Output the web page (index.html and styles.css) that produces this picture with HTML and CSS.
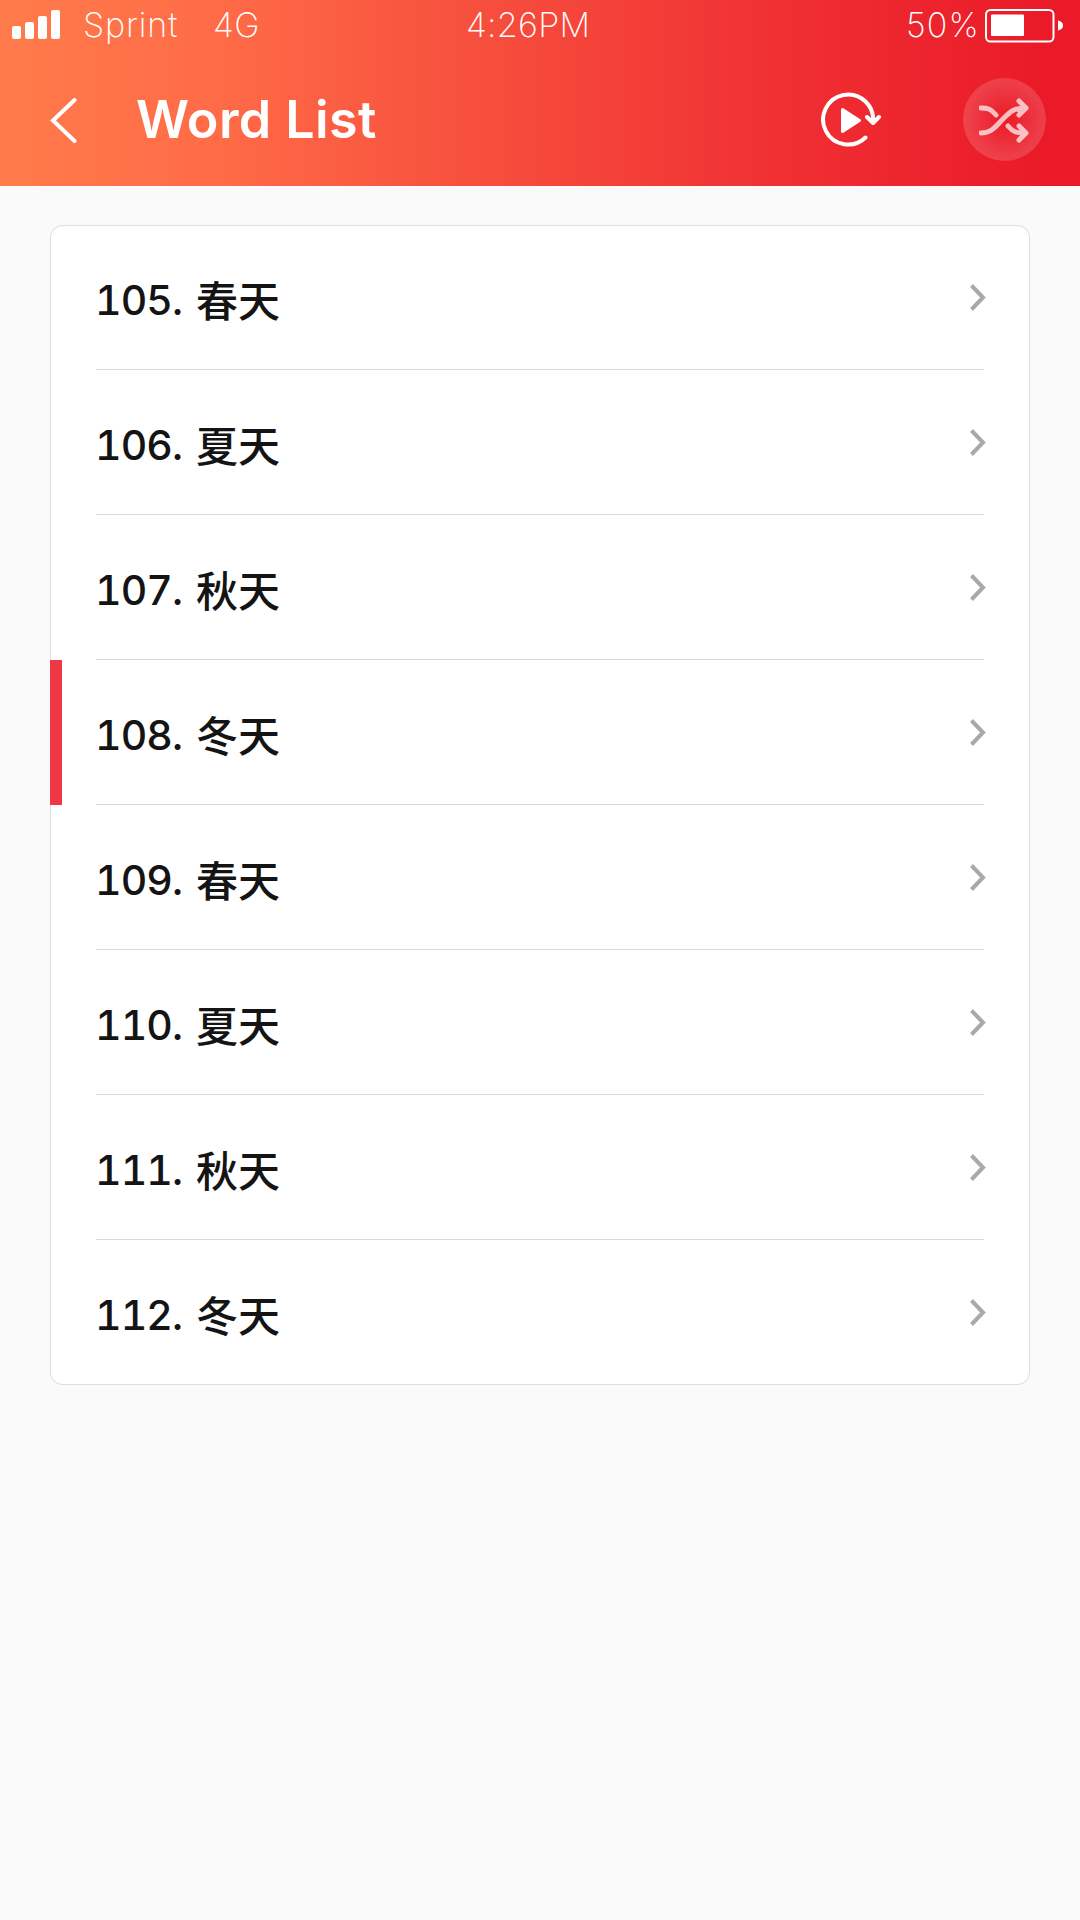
FILE: index.html
```html
<!DOCTYPE html>
<html lang="en">
<head>
<meta charset="utf-8">
<title>Word List</title>
<link rel="stylesheet" href="styles.css">
</head>
<body>
<svg class="defs" width="0" height="0"><symbol id="chevron" viewBox="0 0 16 28"><path d="M1.500 1.500 13 13.500 1.500 25.500"/></symbol></svg>
<header class="header">
  <div class="status">
    <svg class="signal" width="48" height="30" viewBox="0 0 48 30"><rect y="16" width="9" height="13" rx="2"/><rect x="13" y="12" width="9" height="17" rx="2"/><rect x="26" y="6" width="9" height="23" rx="2"/><rect x="39" width="9" height="29" rx="2"/></svg>
    <span class="carrier">Sprint</span>
    <span class="network">4G</span>
    <span class="time">4:26PM</span>
    <span class="percent">50%</span>
    <svg class="battery" width="79" height="34" viewBox="0 0 79 34"><rect class="case" x="1" y="1" width="67.5" height="31.5" rx="4.5"/><rect x="6" y="5.5" width="33" height="21.5" rx="1"/><path d="M73 11.5Q78 12.500 78 16.500t-5 5z"/></svg>
  </div>
  <div class="toolbar">
    <svg class="back" width="28" height="48" viewBox="0 0 28 48"><path d="M25.500 3 4 23.500 25.500 44"/></svg>
    <h1 class="title">Word List</h1>
    <svg class="replay" width="62" height="56" viewBox="0 0 62 56"><path class="arc" d="M44.500 45.500A25 25 0 1 1 52 30M46 25 52 31 58 25"/><path class="play" d="M21.500 17.500 38.500 28.500 21.500 39.500z"/></svg>
    <div class="shuffle">
      <svg width="52" height="46" viewBox="0 0 52 46"><g><path d="M2 11C9 11 12 12 17 18M2 36C13 36 17 29 24 22S34 11 47 11M40 4 47 11 40 18M29 29C34 35 37 36 47 36M40 29 47 36 40 43"/></g></svg>
    </div>
  </div>
</header>
<main>
  <ul class="list">
    <li class="row"><span class="num">105.</span><span class="word">春天</span><svg class="chev"><use href="#chevron"/></svg></li>
    <li class="row"><span class="num">106.</span><span class="word">夏天</span><svg class="chev"><use href="#chevron"/></svg></li>
    <li class="row"><span class="num">107.</span><span class="word">秋天</span><svg class="chev"><use href="#chevron"/></svg></li>
    <li class="row active"><span class="num">108.</span><span class="word">冬天</span><svg class="chev"><use href="#chevron"/></svg></li>
    <li class="row"><span class="num">109.</span><span class="word">春天</span><svg class="chev"><use href="#chevron"/></svg></li>
    <li class="row"><span class="num">110.</span><span class="word">夏天</span><svg class="chev"><use href="#chevron"/></svg></li>
    <li class="row"><span class="num">111.</span><span class="word">秋天</span><svg class="chev"><use href="#chevron"/></svg></li>
    <li class="row"><span class="num">112.</span><span class="word">冬天</span><svg class="chev"><use href="#chevron"/></svg></li>
  </ul>
</main>
</body>
</html>
```
FILE: styles.css
```css
* { box-sizing: border-box; }
body { margin: 0; min-height: 1920px; background: #fafafa; font-family: Inter, "Noto Sans CJK SC", sans-serif; color: #141414; }
.defs { display: block; }
svg { flex: none; fill: none; }
.header { height: 186px; color: #fff; background: linear-gradient(90deg, #ff7b4b 0%, #ff6b47 20%, #f8553f 39%, #f03033 72%, #ea1a28 97%); }
.status { display: flex; height: 50px; padding: 0 16px 0 12px; font-size: 34px; font-weight: 200; line-height: 50px; white-space: nowrap; }
.signal { margin-top: 10px; fill: #fff; }
.carrier { width: 130px; margin-left: 23px; letter-spacing: .9px; }
.network { width: 253px; letter-spacing: .5px; }
.time { width: 440px; letter-spacing: .3px; }
.percent { width: 79px; letter-spacing: 1.2px; }
.battery { margin-top: 9px; margin-left: auto; fill: #fff; }
.case { fill: none; stroke: #fff; stroke-width: 2; }
.toolbar { display: flex; align-items: center; height: 136px; padding: 0 34px 0 49px; }
.back { stroke: #fff; stroke-width: 4; stroke-linecap: round; stroke-linejoin: miter; margin-top: 5px; }
.title { flex: 1; margin: 4px 0 0 59px; font-size: 52px; font-weight: 600; line-height: 62px; letter-spacing: .4px; }
.replay { margin: 4px 80px 0 0; }
.arc { stroke: #fff; stroke-width: 4; stroke-linecap: round; stroke-linejoin: round; }
.play { fill: #fff; stroke: #fff; stroke-width: 3; stroke-linejoin: round; }
.shuffle { display: flex; align-items: center; justify-content: center; width: 83px; height: 83px; margin-top: 3px; border-radius: 50%; background: radial-gradient(circle closest-side, rgba(255,255,255,0) 10%, rgba(255,255,255,.15) 90%); }
.shuffle g { opacity: .7; stroke: #fff; stroke-width: 5; stroke-linecap: round; stroke-linejoin: round; }
.list { margin: 39px 50px 0; padding: 0; list-style: none; background: #fff; border-radius: 13px; box-shadow: inset 0 0 0 1px #dedede; }
.row { position: relative; display: flex; align-items: center; height: 145px; padding: 0 44px 0 46px; font-weight: 500; }
.row:not(:last-child)::after { content: ""; position: absolute; left: 46px; right: 46px; bottom: 0; height: 1px; background: #d9d9d9; }
.active::before { content: ""; position: absolute; left: 0; top: 0; width: 12px; height: 145px; background: #f03744; }
.num { width: 101px; margin: 4px 0 0 -1px; font-size: 41px; font-weight: 450; font-feature-settings: "tnum"; line-height: 50px; letter-spacing: -.9px; }
.word { flex: 1; margin-top: 2px; font-family: "Noto Sans CJK SC", sans-serif; font-size: 42px; line-height: 60px; }
.chev { width: 16px; height: 28px; stroke: #a9a9a9; stroke-width: 4; }
```
